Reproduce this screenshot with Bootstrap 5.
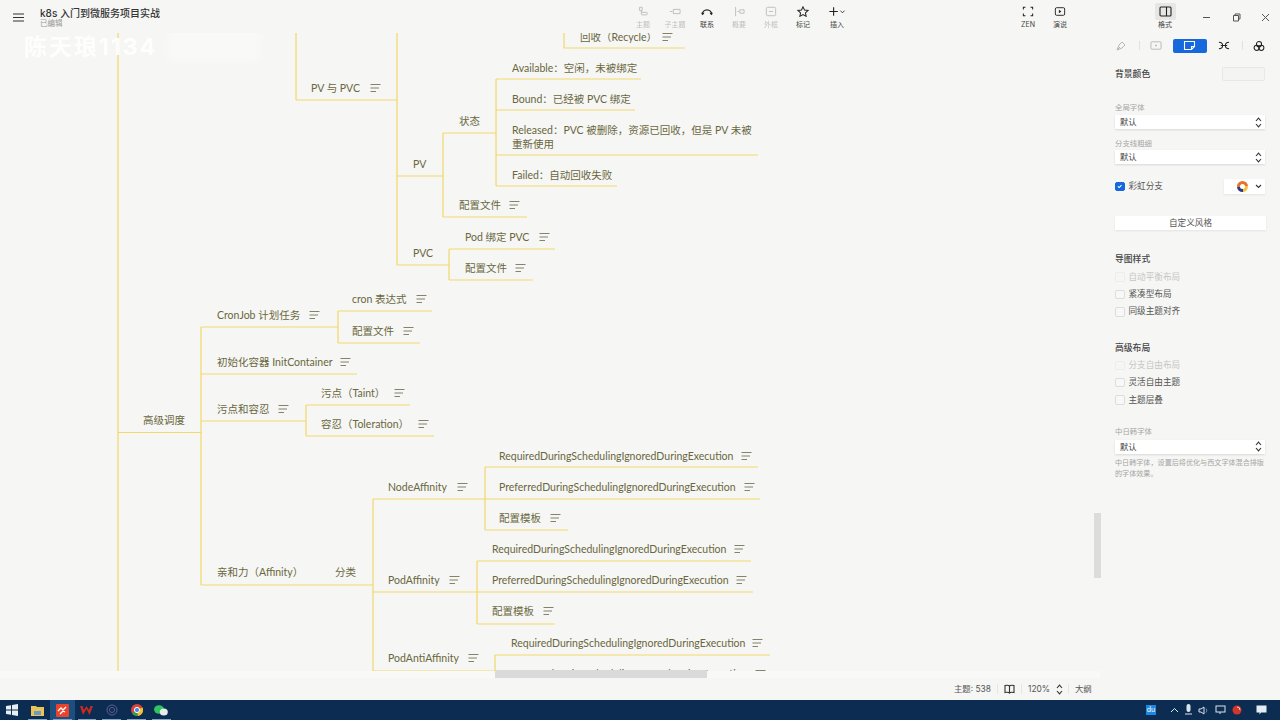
<!DOCTYPE html>
<html lang="zh-CN"><head><meta charset="utf-8"><title>k8s 入门到微服务项目实战</title>
<link rel="stylesheet" href="https://cdn.jsdelivr.net/npm/bootstrap@5.3.0/dist/css/bootstrap.min.css">
<style>
html,body{height:100%;overflow:hidden}
body{background:#f6f6f4;font-family:"Inter","Noto Sans CJK SC",sans-serif;color:#333;font-size:9px}
.app-shell{width:1280px;height:720px}
.top-bar{height:33px;padding-left:13px}
.menu-icon{margin-top:13px;flex:none}
.doc-title{font-size:10px;font-weight:500;line-height:12px;color:#333;margin-left:16px;padding-top:7px}
.doc-state{font-size:7.5px;line-height:9px;color:#999;margin-left:16px}
.tool-group{position:absolute;left:627px;top:0;height:33px}
.tool-item{width:32px;padding-top:6px;font-size:7px;line-height:9px;color:#444;text-align:center}
.tool-item svg{display:block;margin:0 auto 3px;height:11px}
.tool-off{opacity:.32}
.tool-wide{width:36px}
.view-group{position:absolute;left:1012px;top:0}
.fmt-btn{position:absolute;left:1155px;top:3px;width:21px;height:17px;background:#e6e6e4;border-radius:2px}
.fmt-item{position:absolute;left:1149px;top:0;width:32px}
.win-ctl{position:absolute;left:1192px;top:8px;width:88px;height:18px;padding:0 10px}
.win-ctl svg{display:block}
.work-area{height:645px}
.map-canvas{width:1100px;height:638px;position:relative;overflow:hidden}
.map-lines{position:absolute;left:0;top:0}
.map-lines path{fill:none;stroke:#f2d76a;stroke-width:1.2}
.map-node{position:absolute;font-family:"Lato","Noto Sans CJK SC",sans-serif;font-size:10.5px;line-height:13.5px;color:#69673e;white-space:nowrap;transform:translateY(-50%)}
.map-note{position:absolute;transform:translateY(-50%)}
.wm-main{position:absolute;left:24px;top:0;font-size:23px;line-height:29px;font-weight:700;color:#fff;letter-spacing:2px;opacity:.92}
.wm-ghost{position:absolute;left:168px;top:-6px;width:92px;height:34px;background:#fafafa;filter:blur(3px);opacity:.8}
.v-scroll{position:absolute;left:1094px;top:513px;width:7px;height:65px;background:#dcdcdc}
.h-track{position:absolute;left:0;top:671px;width:1100px;height:7px;background:#f9f9f8}
.h-thumb{position:absolute;left:495px;top:670px;width:212px;height:8px;background:#dadada}
.side-panel{width:180px;padding:0 15px;position:relative}
.tab-row{height:27px;margin-top:-1px}
.tab-cell{width:12px;height:14px}
.tab-on{width:35px;background:#1668dc;border-radius:2px;margin:0 11px}
.tab-sep{width:1px;height:9px;background:#e2e2e0;margin:0 10px 0 12px}
.side-label{font-size:8.8px;line-height:12px;color:#444;font-weight:500}
.swatch-box{width:43px;height:14px;background:#f4f4f2;border:1px solid #e8e8e6;border-radius:2px}
.faint-label{font-size:7.4px;line-height:10px;color:#a5a5a5}
.pick-select{width:150px;height:14px;background:#fff;box-shadow:0 1px 2px rgba(0,0,0,.12);padding:0 3px 0 5px;font-size:8.4px;line-height:14px;color:#444}
.opt-row{height:17.4px;font-size:8.6px;color:#555}
.opt-row .form-check-input{width:9.5px;height:9.5px;margin:0 4px 0 0;border-radius:2px;border-color:#ddd;background-color:#f8f8f8;flex:none}
.opt-row .form-check-input:checked{background-color:#1668dc;border-color:#1668dc}
.opt-off{color:#c6c6c6}
.opt-off .form-check-input{opacity:.35}
.rainbow-pick{width:41px;height:15px;background:#fff;box-shadow:0 1px 2px rgba(0,0,0,.08);gap:7px;padding-right:3px}
.rainbow-dot{width:11px;height:11px;border-radius:50%;background:conic-gradient(#e8702a 0 25%,#f3c03e 0 50%,#2e3a87 0 75%,#e8702a 0 100%);position:relative}
.rainbow-dot::after{content:"";position:absolute;left:3px;top:3px;width:5px;height:5px;border-radius:50%;background:#fff}
.wide-btn{width:151px;height:14px;background:#fff;box-shadow:0 1px 2px rgba(0,0,0,.08);font-size:8.6px;line-height:14px;color:#555;text-align:center}
.help-note{font-size:7.1px;line-height:11px;color:#a5a5a5;width:152px;margin-top:3px}
.mt-a{margin-top:2px}.mt-b{margin-top:1px}.mt-c{margin-top:3px}.mt-d{margin-top:3px}
.bg-row{margin-top:7px;height:16px}
.lbl-font{margin-top:21px}.lbl-branch{margin-top:10px}.rainbow-row{margin-top:14px}
.btn-gap{margin-top:21px}.lbl-map{margin-top:23px}.lbl-adv{margin-top:21px}.lbl-cjk{margin-top:18px}
.status-strip{height:22px}
.strip-inner{position:absolute;left:954px;top:681px;height:16px;font-size:8.4px;color:#555}
.strip-sep{width:1px;height:10px;background:#e6e6e4;margin:0 6px}
.chev-gap{margin-left:6px}
.strip-tight{margin:0 6px 0 5px}
.task-bar{height:20px;background:#0c2c52;position:relative}
.win-logo{margin:0 6px 0 5px}
.task-app{width:24.8px;height:20px;position:relative}
.task-app::after{content:"";position:absolute;left:3px;right:3px;bottom:0;height:1.5px;background:#7fa6c9}
.task-on{background:#1c4f7f}
.task-tray{position:absolute;left:1146px;top:0;height:20px;gap:6px}
.du-mark{width:10px;height:10px;background:#1e88e0;font-size:7px;line-height:10px;color:#fff;text-align:center}
</style></head>
<body>
<div class="app-shell d-flex flex-column position-relative">
<header class="top-bar d-flex align-items-start position-relative">
  <svg class="menu-icon" width="11" height="9" viewBox="0 0 11 9"><path d="M0 1h11M0 4.500h11M0 8h11" stroke="#333" stroke-width="1.200"/></svg>
  <div><div class="doc-title">k8s 入门到微服务项目实战</div><div class="doc-state">已编辑</div></div>
  <div class="tool-group d-flex">
    <div class="tool-item tool-off"><svg width="14" height="13" viewBox="0 0 14 13"><path d="M3 1.500h3v4H3zM5 6v3.500a1 1 0 0 0 1 1h5a1 1 0 0 0 1-1v-1a1 1 0 0 0-1-1H5" fill="none" stroke="#333"/></svg>主题</div>
    <div class="tool-item tool-off"><svg width="14" height="13" viewBox="0 0 14 13"><path d="M1 6.500h3M5 4h8v5H5z" fill="none" stroke="#333"/></svg>子主题</div>
    <div class="tool-item"><svg width="14" height="13" viewBox="0 0 14 13"><path d="M1.500 10a5.500 5.500 0 0 1 11 0" fill="none" stroke="#222" stroke-width="1.600"/><path d="M0 8l2 3 2-3zM10 8l2 3 2-3z" fill="#222"/></svg>联系</div>
    <div class="tool-item tool-off"><svg width="14" height="13" viewBox="0 0 14 13"><path d="M3 1v11M5 6.500h2M8 4.500h5v4H8z" fill="none" stroke="#333"/></svg>概要</div>
    <div class="tool-item tool-off"><svg width="14" height="13" viewBox="0 0 14 13"><rect x="1.500" y="1.500" width="11" height="10" rx="1.500" fill="none" stroke="#333"/><path d="M4.500 6.500h5" stroke="#333"/></svg>外框</div>
    <div class="tool-item"><svg width="14" height="13" viewBox="0 0 14 13"><path d="M7 1l1.800 3.800 4.200.5-3.100 2.800.8 4.100L7 10.200l-3.700 2 .8-4.100L1 5.300l4.200-.5z" fill="none" stroke="#222" stroke-width="1.200"/></svg>标记</div>
    <div class="tool-item tool-wide"><svg width="22" height="13" viewBox="0 0 22 13"><path d="M7 1.500v10M2 6.500h10" stroke="#222" stroke-width="1.300"/><path d="M15 5.500l2.500 2.500 2.500-2.500" fill="none" stroke="#222"/></svg>插入</div>
  </div>
  <div class="view-group d-flex">
    <div class="tool-item"><svg width="14" height="13" viewBox="0 0 14 13"><path d="M1.500 4V1.500H4M10 1.500h2.500V4M12.500 9v2.500H10M4 11.500H1.500V9" fill="none" stroke="#222" stroke-width="1.200"/></svg>ZEN</div>
    <div class="tool-item"><svg width="14" height="13" viewBox="0 0 14 13"><rect x="1.500" y="2" width="11" height="9" rx="1.500" fill="none" stroke="#222" stroke-width="1.100"/><path d="M5.700 4.500l3 2-3 2z" fill="#222"/></svg>演说</div>
  </div>
  <div class="fmt-btn"></div>
  <div class="tool-item fmt-item"><svg width="13" height="11" viewBox="0 0 13 11"><rect x="1" y="1" width="11" height="9" rx="1" fill="none" stroke="#222" stroke-width="1.100"/><path d="M7.500 1v9" stroke="#222" stroke-width="1.100"/></svg>格式</div>
  <div class="win-ctl d-flex justify-content-between align-items-center">
    <svg width="9" height="9" viewBox="0 0 9 9"><path d="M1 4.500h7" stroke="#555"/></svg>
    <svg width="9" height="9" viewBox="0 0 9 9"><path d="M1.500 2.500h5v5.500h-5zM3 2.500V1h5v5H6.500" fill="none" stroke="#555"/></svg>
    <svg width="9" height="9" viewBox="0 0 9 9"><path d="M1 1l7 7M8 1L1 8" stroke="#555"/></svg>
  </div>
</header>
<main class="work-area d-flex">
  <section class="map-canvas" id="mapCanvas">
    <div class="wm-ghost"></div>
    <svg class="map-lines" width="1100" height="638" viewBox="0 33 1100 638">
      <path d="M118 33V671M118 432.500H201M201 327V585"/>
      <path d="M296 33V100M296 100H397M397 33V265M564 33V48H685"/>
      <path d="M397 176H443M443 133V217M443 133H496M496 79V186M496 79H641M496 110H635M496 155H758M496 186H617M443 217H527"/>
      <path d="M397 265H449M449 249V280M449 249H555M449 280H533"/>
      <path d="M201 327H338M338 311V343M338 311H432M338 343H420M201 374H357"/>
      <path d="M201 421H306M306 405V436M306 405H410M306 436H434"/>
      <path d="M201 585H373M373 499V671M373 499H485M485 467V530M485 467H758M485 499H760M485 530H568"/>
      <path d="M373 592H477M477 561V624M477 561H751M477 592H753M477 624H555"/>
      <path d="M373 671H495M495 655V671M495 655H770"/>
    </svg>
    <div class="wm-main">陈天琅1134</div>
  </section>
  <aside class="side-panel">
    <div class="tab-row d-flex align-items-center">
      <div class="tab-cell d-flex align-items-center justify-content-center tool-off"><svg width="12" height="12" viewBox="0 0 12 12"><path d="M2 10l2-5 3-3 3 3-3 3zM2 10l3-3" fill="none" stroke="#333"/></svg></div>
      <span class="tab-sep"></span>
      <div class="tab-cell d-flex align-items-center justify-content-center tool-off"><svg width="13" height="11" viewBox="0 0 13 11"><rect x="1" y="1.500" width="11" height="8" rx="1" fill="none" stroke="#333"/><circle cx="6.500" cy="5.500" r="1" fill="#333"/></svg></div>
      <div class="tab-cell tab-on d-flex align-items-center justify-content-center"><svg width="13" height="11" viewBox="0 0 13 11"><path d="M1.500 1.500h10v5l-3 3h-7zM8.500 9.500v-3h3" fill="none" stroke="#fff" stroke-width="1.100"/></svg></div>
      <div class="tab-cell d-flex align-items-center justify-content-center"><svg width="13" height="11" viewBox="0 0 13 11"><path d="M1 2c2.500 0 4 1.500 4 3.500S3.500 9 1 9M12 2c-2.500 0-4 1.500-4 3.500S9.500 9 12 9M3 5.500h7" fill="none" stroke="#222" stroke-width="1.100"/></svg></div>
      <span class="tab-sep"></span>
      <div class="tab-cell d-flex align-items-center justify-content-center"><svg width="13" height="12" viewBox="0 0 13 12"><circle cx="6.500" cy="4" r="2.800" fill="none" stroke="#222" stroke-width="1.100"/><circle cx="4" cy="8" r="2.800" fill="none" stroke="#222" stroke-width="1.100"/><circle cx="9" cy="8" r="2.800" fill="none" stroke="#222" stroke-width="1.100"/></svg></div>
    </div>
    <div class="bg-row d-flex justify-content-between align-items-center"><span class="side-label">背景颜色</span><span class="swatch-box"></span></div>
    <div class="faint-label lbl-font">全局字体</div>
    <div class="pick-select mt-a d-flex justify-content-between align-items-center"><span>默认</span><svg width="7" height="11" viewBox="0 0 7 11"><path d="M1 4l2.500-2.800L6 4M1 7l2.500 2.800L6 7" fill="none" stroke="#333" stroke-width="1.100"/></svg></div>
    <div class="faint-label lbl-branch">分支线粗细</div>
    <div class="pick-select mt-b d-flex justify-content-between align-items-center"><span>默认</span><svg width="7" height="11" viewBox="0 0 7 11"><path d="M1 4l2.500-2.800L6 4M1 7l2.500 2.800L6 7" fill="none" stroke="#333" stroke-width="1.100"/></svg></div>
    <div class="rainbow-row d-flex justify-content-between align-items-center">
      <label class="opt-row d-flex align-items-center mb-0"><input class="form-check-input" type="checkbox" checked><span>彩虹分支</span></label>
      <div class="rainbow-pick d-flex align-items-center justify-content-end"><span class="rainbow-dot"></span><svg width="7" height="5" viewBox="0 0 7 5"><path d="M1 1l2.500 2.500L6 1" fill="none" stroke="#333" stroke-width="1.100"/></svg></div>
    </div>
    <div class="wide-btn btn-gap">自定义风格</div>
    <div class="side-label lbl-map">导图样式</div>
    <div class="opt-row opt-off mt-d d-flex align-items-center"><input class="form-check-input" type="checkbox" disabled><span>自动平衡布局</span></div>
    <div class="opt-row d-flex align-items-center"><input class="form-check-input" type="checkbox"><span>紧凑型布局</span></div>
    <div class="opt-row d-flex align-items-center"><input class="form-check-input" type="checkbox"><span>同级主题对齐</span></div>
    <div class="side-label lbl-adv">高级布局</div>
    <div class="opt-row opt-off mt-c d-flex align-items-center"><input class="form-check-input" type="checkbox" disabled><span>分支自由布局</span></div>
    <div class="opt-row d-flex align-items-center"><input class="form-check-input" type="checkbox"><span>灵活自由主题</span></div>
    <div class="opt-row d-flex align-items-center"><input class="form-check-input" type="checkbox"><span>主题层叠</span></div>
    <div class="faint-label lbl-cjk">中日韩字体</div>
    <div class="pick-select mt-c d-flex justify-content-between align-items-center"><span>默认</span><svg width="7" height="11" viewBox="0 0 7 11"><path d="M1 4l2.500-2.800L6 4M1 7l2.500 2.800L6 7" fill="none" stroke="#333" stroke-width="1.100"/></svg></div>
    <div class="help-note">中日韩字体，设置后将优化与西文字体混合排版的字体效果。</div>
  </aside>
</main>
<div class="v-scroll"></div>
<div class="status-strip"></div>
<div class="strip-inner d-flex align-items-center">
  <span>主题: 538</span><span class="strip-sep"></span>
  <svg width="11" height="10" viewBox="0 0 11 10"><path d="M5.500 2C4.500 1 3 1 1 1.500V8.500C3 8 4.500 8 5.500 9 6.500 8 8 8 10 8.500V1.500C8 1 6.500 1 5.500 2zM5.500 2V9" fill="none" stroke="#333" stroke-width="1.100"/></svg>
  <span class="strip-sep"></span><span>120%</span>
  <svg class="chev-gap" width="7" height="11" viewBox="0 0 7 11"><path d="M1 4l2.500-2.800L6 4M1 7l2.500 2.800L6 7" fill="none" stroke="#333" stroke-width="1.100"/></svg>
  <span class="strip-sep strip-tight"></span><span>大纲</span>
</div>
<footer class="task-bar d-flex align-items-center">
  <svg class="win-logo" width="14" height="12" viewBox="0 0 14 12"><path d="M1 2l5-.8v4.300H1zM7 1l6-1v5.500H7zM1 6.500h5v4.300L1 10zM7 6.500h6V12l-6-1z" fill="#e8eef4"/></svg>
  <div class="task-app d-flex align-items-center justify-content-center"><svg width="13" height="11" viewBox="0 0 13 11"><path d="M0 1h5l1 1h7v9H0z" fill="#e9c35c"/><rect x="3" y="6" width="7" height="4" fill="#6d9cc0"/></svg></div>
  <div class="task-app task-on d-flex align-items-center justify-content-center"><svg width="13" height="13" viewBox="0 0 13 13"><rect width="13" height="13" rx="1" fill="#e8442d"/><path d="M2 7l3-3 2 2 3-3M4 10l3-3 2 1" fill="none" stroke="#fff" stroke-width="1.300"/></svg></div>
  <div class="task-app d-flex align-items-center justify-content-center"><svg width="13" height="11" viewBox="0 0 13 11"><path d="M0 1l3 9 3.500-6 3 6L13 1h-2.500L9 5 6.500 1 4 5 2.500 1z" fill="#c62b23"/></svg></div>
  <div class="task-app d-flex align-items-center justify-content-center"><svg width="12" height="12" viewBox="0 0 12 12"><circle cx="6" cy="6" r="5" fill="none" stroke="#5b5f95"/><circle cx="6" cy="6" r="2.500" fill="none" stroke="#5b5f95"/></svg></div>
  <div class="task-app d-flex align-items-center justify-content-center"><svg width="12" height="12" viewBox="0 0 12 12"><circle cx="6" cy="6" r="6" fill="#dc4437"/><path d="M6 6L1 9a6 6 0 0 0 6 3z" fill="#2f9e50"/><path d="M6 6l5.500-2.500A6 6 0 0 1 7 12z" fill="#f3c12d"/><circle cx="6" cy="6" r="2.600" fill="#4a86e8" stroke="#fff"/></svg></div>
  <div class="task-app d-flex align-items-center justify-content-center"><svg width="14" height="11" viewBox="0 0 14 11"><ellipse cx="5" cy="4.500" rx="5" ry="4.200" fill="#2fc462"/><ellipse cx="9.800" cy="7" rx="4" ry="3.500" fill="#e4efe8"/></svg></div>
  <div class="task-tray d-flex align-items-center">
    <span class="du-mark">du</span>
    <svg class="ms-2" width="9" height="6" viewBox="0 0 9 6"><path d="M1 5l3.500-3.500L8 5" fill="none" stroke="#e6edf3"/></svg>
    <svg width="7" height="12" viewBox="0 0 7 12"><rect x="1.500" y="0" width="4" height="8" rx="2" fill="#dbe5ee"/><path d="M0 10h7" stroke="#dbe5ee"/></svg>
    <svg width="11" height="9" viewBox="0 0 11 9"><path d="M1 3h2l3-2v7L3 6H1z" fill="none" stroke="#dbe5ee"/><path d="M8 2.500c1 1.500 1 2.500 0 4" fill="none" stroke="#8aa2b8"/></svg>
    <svg width="11" height="10" viewBox="0 0 11 10"><rect x="1" y="1" width="9" height="6" fill="none" stroke="#dbe5ee"/><path d="M5 7v2" stroke="#dbe5ee"/></svg>
    <svg width="10" height="10" viewBox="0 0 10 10"><circle cx="5" cy="5" r="4.500" fill="#d4352b"/><path d="M5 2a3 3 0 0 1 3 3" stroke="#f4d8c0" fill="none"/></svg>
    <svg class="ms-2" width="11" height="10" viewBox="0 0 11 10"><path d="M.5.500h10v7H5L3.500 9.500V7.500H.5z" fill="#e4edf5"/></svg>
  </div>
</footer>
<div class="h-track"></div>
<div class="h-thumb"></div>
</div>
<script>
var nodes=[["回收（Recycle）",580,38,667],["Available：空闲，未被绑定",512,69],["Bound：已经被 PVC 绑定",512,100],["Released：PVC 被删除，资源已回收，但是 PV 未被<br>重新使用",512,137],["Failed：自动回收失败",512,176],["状态",459,122],["PV",413,165],["配置文件",459,206,514],["Pod 绑定 PVC",465,238,544],["配置文件",465,269,520],["PVC",413,254],["PV 与 PVC",311,89,375],["CronJob 计划任务",217,316,314],["cron 表达式",352,300,421],["配置文件",352,332,408],["初始化容器 InitContainer",217,363,345],["污点和容忍",217,410,283],["污点（Taint）",321,394,399],["容忍（Toleration）",321,425,423],["高级调度",143,421],["亲和力（Affinity）",217,573],["分类",335,573],["NodeAffinity",388,488,462],["RequiredDuringSchedulingIgnoredDuringExecution",499,457,746],["PreferredDuringSchedulingIgnoredDuringExecution",499,488,749],["配置模板",499,519,555],["PodAffinity",388,581,454],["RequiredDuringSchedulingIgnoredDuringExecution",492,550,739],["PreferredDuringSchedulingIgnoredDuringExecution",492,581,741],["配置模板",492,612,548],["PodAntiAffinity",388,659,473],["RequiredDuringSchedulingIgnoredDuringExecution",511,644,757],["PreferredDuringSchedulingIgnoredDuringExecution",511,675,760]];
var host=document.getElementById("mapCanvas");
nodes.forEach(function(n){
  var d=document.createElement("div");d.className="map-node";d.innerHTML=n[0];
  d.style.left=n[1]+"px";d.style.top=(n[2]-33)+"px";host.appendChild(d);
  if(n[3]){var s=document.createElementNS("http://www.w3.org/2000/svg","svg");
    s.setAttribute("class","map-note");s.setAttribute("width","11");s.setAttribute("height","9");s.setAttribute("viewBox","0 0 11 9");
    s.innerHTML='<path d="M.5 1h10M.5 4.500h8.500M.5 8h5.500" stroke="#77755a" stroke-width=".9"/>';
    s.style.left=(n[3]-5.5)+"px";s.style.top=(n[2]-34)+"px";host.appendChild(s);}
});
</script>
<script src="https://cdn.jsdelivr.net/npm/bootstrap@5.3.0/dist/js/bootstrap.bundle.min.js"></script>
</body></html>
